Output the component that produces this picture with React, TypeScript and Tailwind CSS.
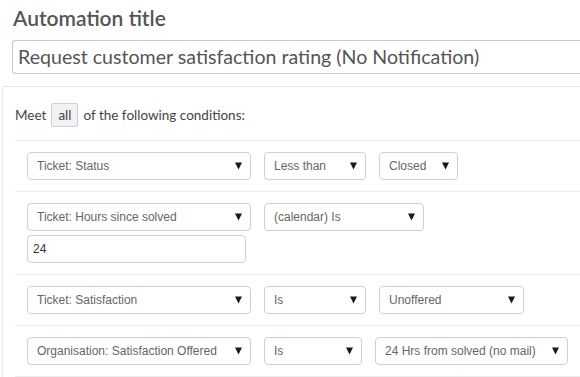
import React from 'react';

interface SelectBoxProps {
  label: string;
  width: string;
}

function SelectBox({ label, width }: SelectBoxProps) {
  return (
    <div
      className={`${width} h-[28px] flex items-center justify-between pl-[9px] pr-[8px] border border-[#cfcfcf] rounded-[4px] bg-white text-[12px] text-[#666] font-['Liberation_Sans',Arial,sans-serif]`}
    >
      <span className="truncate">{label}</span>
      <svg width="7" height="8" viewBox="0 0 7 8" className="shrink-0">
        <path d="M0 0.5 H7 L3.5 7.5 Z" fill="#1a1a1a" />
      </svg>
    </div>
  );
}

interface ConditionRowProps {
  children: React.ReactNode;
}

function ConditionRow({ children }: ConditionRowProps) {
  return (
    <div className="pl-[12px] pt-[11px] pb-[11px] border-b border-[#ececec]">
      {children}
    </div>
  );
}

export default function App() {
  return (
    <div className="w-[580px] h-[377px] overflow-hidden bg-white font-['Lato','Open_Sans',sans-serif] text-[#555]">
      {/* Title */}
      <h1 className="pl-[13px] pt-[4px] text-[21px] leading-[28px] font-semibold text-[#555]">
        Automation title
      </h1>

      {/* Title input */}
      <div className="ml-[12px] mt-[8px] h-[34px] flex items-center pl-[5px] border border-r-0 border-[#c8c8c8] rounded-l-[4px] text-[19.6px] text-[#555]">
        Request customer satisfaction rating (No Notification)
      </div>

      {/* Conditions panel */}
      <div className="ml-[2px] mt-[12px] border-l border-t border-[#e6e6e6] rounded-tl-[4px] pl-[12px]">
        <div className="pt-[16px] pb-[13px] border-b border-[#ececec] flex items-center gap-[5px] text-[13.5px] text-[#444]">
          <span>Meet</span>
          <span className="h-[24px] px-[6px] flex items-center bg-[#f2f2f2] border border-[#cfcfcf] rounded-[2px]">
            all
          </span>
          <span>of the following conditions:</span>
        </div>

        <ConditionRow>
          <div className="flex gap-[13px]">
            <SelectBox label="Ticket: Status" width="w-[224px]" />
            <SelectBox label="Less than" width="w-[102px]" />
            <SelectBox label="Closed" width="w-[79px]" />
          </div>
        </ConditionRow>

        <ConditionRow>
          <div className="flex gap-[13px]">
            <SelectBox label="Ticket: Hours since solved" width="w-[224px]" />
            <SelectBox label="(calendar) Is" width="w-[160px]" />
          </div>
          <div className="mt-[4px] w-[219px] h-[28px] flex items-center pl-[5px] border border-[#cfcfcf] rounded-[4px] text-[12px] text-[#333] font-['Liberation_Sans',Arial,sans-serif]">
            24
          </div>
        </ConditionRow>

        <ConditionRow>
          <div className="flex gap-[13px]">
            <SelectBox label="Ticket: Satisfaction" width="w-[224px]" />
            <SelectBox label="Is" width="w-[102px]" />
            <SelectBox label="Unoffered" width="w-[145px]" />
          </div>
        </ConditionRow>

        <ConditionRow>
          <div className="flex gap-[13px]">
            <SelectBox label="Organisation: Satisfaction Offered" width="w-[224px]" />
            <SelectBox label="Is" width="w-[98px]" />
            <SelectBox label="24 Hrs from solved (no mail)" width="w-[193px]" />
          </div>
        </ConditionRow>
      </div>
    </div>
  );
}
